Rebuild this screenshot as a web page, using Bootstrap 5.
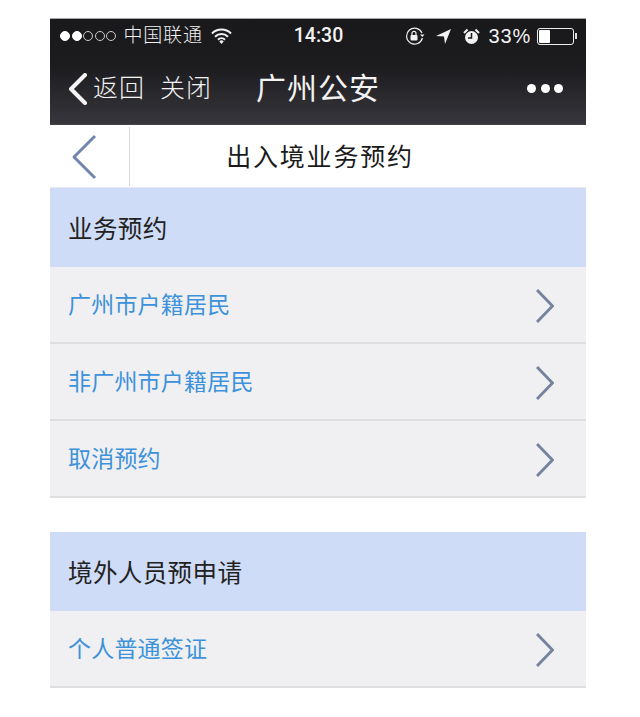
<!DOCTYPE html>
<html lang="zh">
<head>
<meta charset="utf-8">
<title>出入境业务预约</title>
<link href="https://cdn.jsdelivr.net/npm/bootstrap@5.3.0/dist/css/bootstrap.min.css" rel="stylesheet">
<style>
html,body{height:717px;overflow:hidden;background:#fff}
body{font-family:"Liberation Sans","Noto Sans CJK SC",sans-serif;padding:18px 54px 0 50px}
.phone-top{background:linear-gradient(#19181b 0,#1c1b1e 45%,#37363c 100%);height:107px;color:#f2f2f2;border-top:1px solid #a8a8a8;border-bottom:1px solid #444}
.status-row{height:34px;padding:0 9px 0 10px}
.status-side{flex:1 1 0;min-width:0}
.sig-dots{gap:1.500px}
.sig-dot{width:10px;height:10px;border-radius:50%;border:1px solid #ccc}
.sig-on{background:#fff;border-color:#fff}
.carrier{margin-left:7.500px;font-size:19px;font-weight:300;letter-spacing:.8px;white-space:nowrap}
.wifi-ico{margin-left:8px}
.clock{font-family:Roboto,"Liberation Sans",sans-serif;font-size:19.500px;font-weight:500;padding:0 3px}
.ico-arrow{margin-left:11px}
.ico-alarm{margin-left:12px}
.pct{font-size:20px;letter-spacing:.8px;margin-left:9px}
.batt{width:37px;height:17px;border:1px solid #eee;border-radius:3px;padding:1px;margin-left:6px}
.batt-fill{background:#fff;height:100%;border-radius:1px}
.batt-tip{width:2px;height:6px;background:#ddd;margin-left:1px}
.title-row{height:71px;padding:0 23px 0 18px}
.back-txt{font-size:25px;font-weight:300;margin-left:5px;letter-spacing:1px}
.close-txt{font-size:25px;font-weight:300;margin-left:15px;letter-spacing:1px}
.app-title{font-size:30px;margin-left:44px;letter-spacing:1px;font-weight:400}
.more-dots{gap:4.500px}
.more-dot{width:9px;height:9px;background:#fff;border-radius:50%}
.sub-bar{height:63px;background:#fff;border-bottom:1px solid #e8eaf2}
.sub-back{width:80px;height:59px;margin-top:2px;border-right:1px solid #d8d8d8;padding-left:21px}
.sub-title{font-size:25px;letter-spacing:1.800px;color:#1b1b1b;padding:3px 76px 0 0}
.sec-head{height:79px;background:#cfdcf7;color:#222;font-size:24.500px;padding:6px 0 0 18px;letter-spacing:.4px}
.sec-row{height:77px;background:#f0f0f2;color:#3d92da;font-size:23px;letter-spacing:.2px;padding:2px 32px 0 18px;border-bottom:2px solid #dfdfe1}
.sec-gap{height:34px}
.chev{display:block}
</style>
</head>
<body>
<div class="phone-top">
  <div class="status-row d-flex align-items-center">
    <div class="status-side d-flex align-items-center">
      <div class="d-flex sig-dots">
        <span class="sig-dot sig-on"></span><span class="sig-dot sig-on"></span><span class="sig-dot"></span><span class="sig-dot"></span><span class="sig-dot"></span>
      </div>
      <span class="carrier">中国联通</span>
      <svg class="wifi-ico" width="21" height="16" viewBox="0 0 21 16"><path d="M1 5.500a13.500 13.500 0 0 1 19 0M4 8.700a9.200 9.200 0 0 1 13 0M7 11.700a5 5 0 0 1 7 0" fill="none" stroke="#f2f2f2" stroke-width="2"/><path d="M10.500 16l-2.200-2.600a3.200 3.200 0 0 1 4.400 0z" fill="#f2f2f2"/></svg>
    </div>
    <span class="clock">14:30</span>
    <div class="status-side d-flex align-items-center justify-content-end">
      <svg width="20" height="18" viewBox="0 0 20 18"><path d="M17 6A8 8 0 1 0 17.400 11" fill="none" stroke="#f2f2f2" stroke-width="1.200"/><path d="M15 7.500h4.500l-2.200 2.500z" fill="#f2f2f2"/><rect x="5.500" y="8" width="7" height="5.500" rx="1" fill="#f2f2f2"/><path d="M7 8V6.300a2 2 0 0 1 4 0V8" fill="none" stroke="#f2f2f2" stroke-width="1.200"/></svg>
      <svg class="ico-arrow" width="15" height="15" viewBox="0 0 15 15"><path d="M0 7 15 0 9 15 8 7.500z" fill="#f2f2f2"/></svg>
      <svg class="ico-alarm" width="17" height="17" viewBox="0 0 17 17"><circle cx="8.500" cy="9.500" r="6.500" fill="#f2f2f2"/><path d="M8.500 5V10H5" fill="none" stroke="#1a191c" stroke-width="1.500"/><path d="M1 5 4.500 1.500M16 5 12.500 1.500" stroke="#f2f2f2" stroke-width="2"/></svg>
      <span class="pct">33%</span>
      <div class="batt"><div class="batt-fill" style="width:33%"></div></div>
      <span class="batt-tip"></span>
    </div>
  </div>
  <div class="title-row d-flex align-items-center">
    <svg width="20" height="32" viewBox="0 0 20 32"><path d="M17 2 3 16 17 30" fill="none" stroke="#f4f4f4" stroke-width="4" stroke-linecap="round" stroke-linejoin="round"/></svg>
    <span class="back-txt">返回</span>
    <span class="close-txt">关闭</span>
    <span class="app-title">广州公安</span>
    <div class="ms-auto d-flex more-dots">
      <span class="more-dot"></span><span class="more-dot"></span><span class="more-dot"></span>
    </div>
  </div>
</div>
<div class="sub-bar d-flex align-items-start">
  <div class="sub-back d-flex align-items-center">
    <svg width="26" height="46" viewBox="0 0 26 46"><path d="M24 2 3 23 24 44" fill="none" stroke="#7186ae" stroke-width="3" stroke-linejoin="round"/></svg>
  </div>
  <div class="sub-title flex-grow-1 text-center align-self-center">出入境业务预约</div>
</div>
<div class="sec-head d-flex align-items-center">业务预约</div>
<div class="sec-row d-flex align-items-center justify-content-between">广州市户籍居民
  <svg class="chev" width="18" height="36" viewBox="0 0 18 36"><path d="M1 2 16.500 18 1 34" fill="none" stroke="#76839f" stroke-width="3"/></svg></div>
<div class="sec-row d-flex align-items-center justify-content-between">非广州市户籍居民
  <svg class="chev" width="18" height="36" viewBox="0 0 18 36"><path d="M1 2 16.500 18 1 34" fill="none" stroke="#76839f" stroke-width="3"/></svg></div>
<div class="sec-row d-flex align-items-center justify-content-between">取消预约
  <svg class="chev" width="18" height="36" viewBox="0 0 18 36"><path d="M1 2 16.500 18 1 34" fill="none" stroke="#76839f" stroke-width="3"/></svg></div>
<div class="sec-gap"></div>
<div class="sec-head d-flex align-items-center">境外人员预申请</div>
<div class="sec-row d-flex align-items-center justify-content-between">个人普通签证
  <svg class="chev" width="18" height="36" viewBox="0 0 18 36"><path d="M1 2 16.500 18 1 34" fill="none" stroke="#76839f" stroke-width="3"/></svg></div>
<script src="https://cdn.jsdelivr.net/npm/bootstrap@5.3.0/dist/js/bootstrap.bundle.min.js"></script>
</body>
</html>
